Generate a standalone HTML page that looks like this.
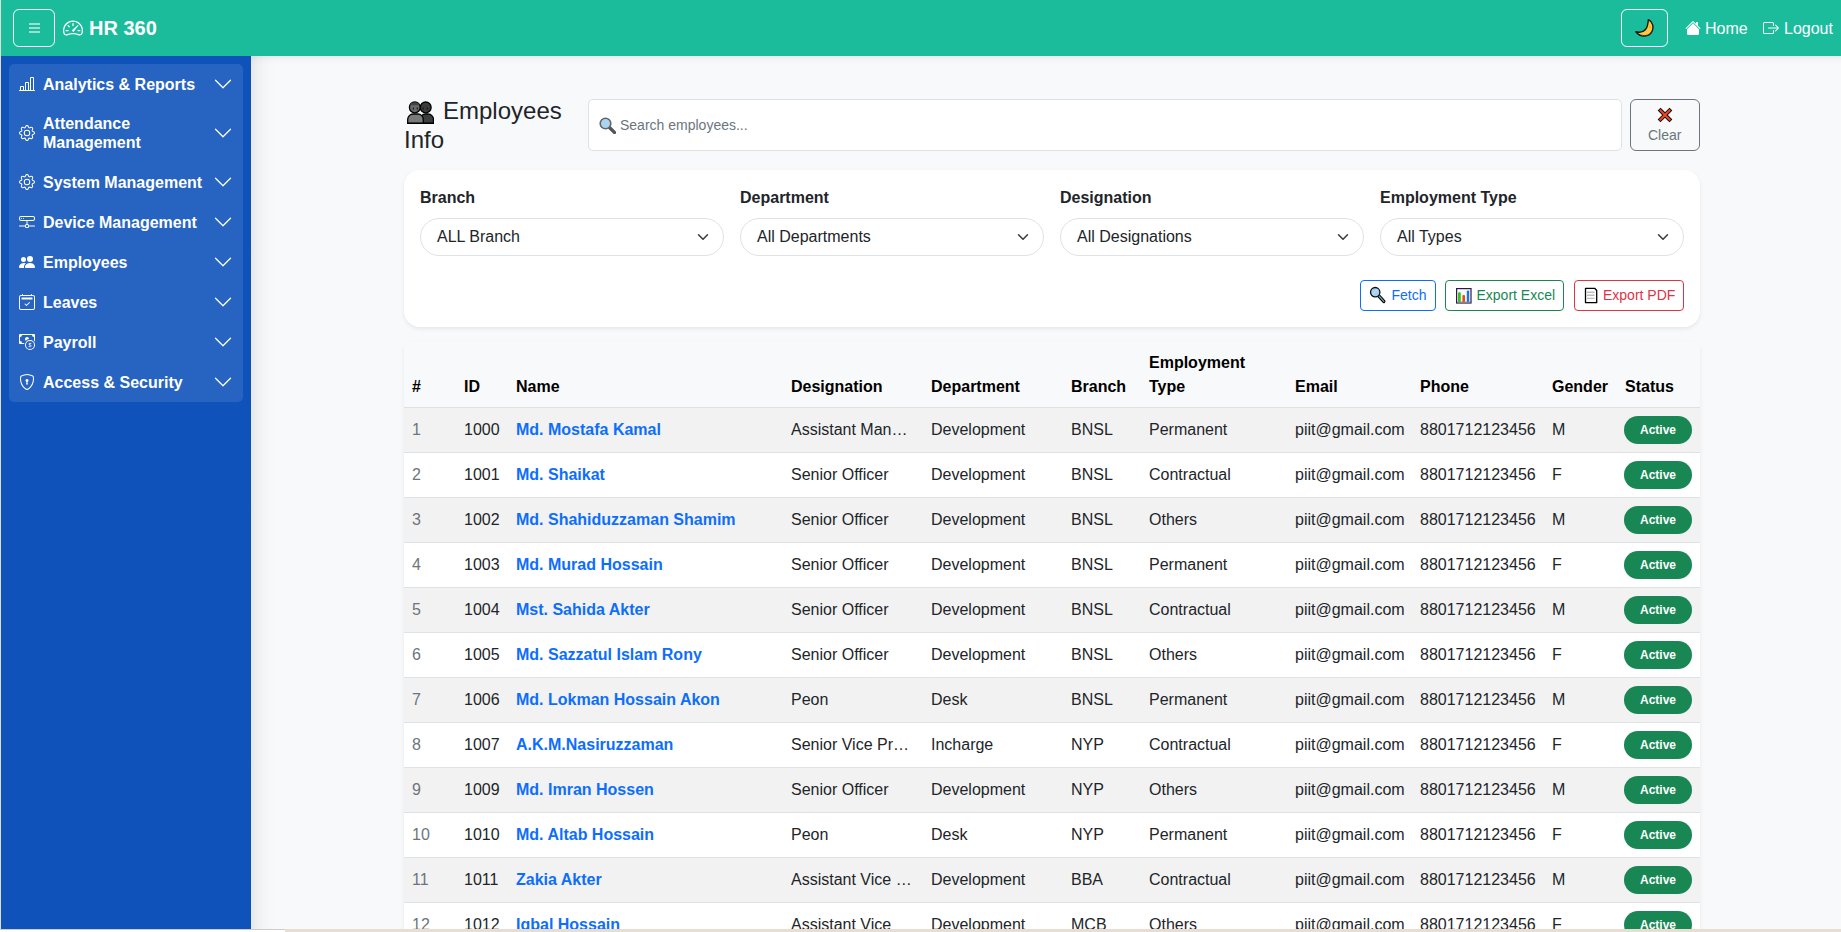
<!DOCTYPE html>
<html><head><meta charset="utf-8"><title>HR 360</title>
<style>
*{box-sizing:border-box}
html,body{margin:0;padding:0;width:1841px;height:932px;overflow:hidden}
body{font-family:"Liberation Sans",sans-serif;font-size:16px;line-height:1.5;color:#212529;background:#f8f9fa;position:relative}
.abs{position:absolute}
#leftline{left:0;top:0;width:1px;height:932px;background:#e6dcd6;z-index:20}
#hdr{left:0;top:0;width:1841px;height:56px;background:#1abc9c;z-index:5}
#hamb{left:13px;top:9px;width:42px;height:38px;border:1px solid #fff;border-radius:6px}
#hamb i{position:absolute;left:15px;width:11px;height:1.6px;background:rgba(255,255,255,.55)}
#brand{left:89px;top:12.5px;font-size:20px;font-weight:700;color:#fff;line-height:30px}
#moon{left:1621px;top:9px;width:47px;height:38px;border:1px solid #fff;border-radius:6px}
.hlink{color:#fff;font-size:16px;line-height:24px;top:16.5px}
#side{left:0;top:56px;width:251px;height:873px;background:#0f52ba;z-index:3}
#shadow{left:251px;top:56px;width:30px;height:873px;background:linear-gradient(to right,rgba(0,0,0,.075),rgba(0,0,0,.035) 7px,rgba(0,0,0,.012) 15px,rgba(0,0,0,0) 24px);z-index:2}
#panel{left:9px;top:8px;width:234px;height:338px;background:rgba(255,255,255,.1);border-radius:5px}
.item{position:absolute;left:0;width:234px;color:#fff;font-weight:700;font-size:16px;line-height:19.2px}
.item svg.ic{position:absolute;left:10px}
.item .tx{position:absolute;left:34px}
.item svg.chev{position:absolute;left:204px;width:20px;height:20px}
#bottom{left:0;top:929px;width:1841px;height:3px;background:#e8ddd3;z-index:30}
#bottomw{left:0;top:929px;width:285px;height:3px;background:#fff;z-index:31;border-top:1px solid #ccc}

#title{left:404px;top:97px;font-size:24px;line-height:28.8px;color:#212529;width:180px}
#search{left:588px;top:99px;width:1034px;height:52px;background:#fff;border:1px solid #dee2e6;border-radius:5px}
#clear{left:1630px;top:99px;width:70px;height:52px;border:1px solid #6c757d;border-radius:6px}
#card{left:404px;top:170px;width:1296px;height:157px;background:#fff;border-radius:16px;box-shadow:0 .125rem .25rem rgba(0,0,0,.075)}
.fcol{position:absolute;top:16px;width:304px}
.flab{font-weight:700;font-size:16px;line-height:24px;margin-bottom:8px}
.fsel{position:relative;height:38px;border:1px solid #dee2e6;border-radius:50rem;padding:6px 16px;line-height:24px;font-size:16px}
.chv{position:absolute;right:14px;top:12px}
.btn{position:absolute;top:110px;height:31px;border:1px solid;border-radius:4px;font-size:14px;line-height:21px}
#tblwrap{left:404px;top:342px;width:1296px;height:600px;background:#fff;border-radius:6px;box-shadow:0 .125rem .25rem rgba(0,0,0,.075);overflow:hidden}
#tbl{border-collapse:collapse;table-layout:fixed;width:1296px}
#tbl th,#tbl td{padding:8px;text-align:left;border-bottom:1px solid #dee2e6;vertical-align:middle;line-height:24px}
#tbl th{background:#f8f9fa;color:#000;font-weight:700;vertical-align:bottom;height:65px}
#tbl td{height:45px}
#tbl tbody tr:nth-child(odd) td{background:#f2f2f2}
#tbl .mut{color:#6c757d}
#tbl a{color:#0d6efd;font-weight:700;text-decoration:none}
.tr{white-space:nowrap;overflow:hidden;text-overflow:ellipsis;width:124px}
.badge{display:inline-block;margin-left:-1px;background:#198754;color:#fff;font-weight:700;font-size:12px;line-height:12px;padding:8px 16px;border-radius:50rem;vertical-align:middle}

.item svg.ic{top:12px}
.item svg.chev{top:10px}
#hshadow{left:251px;top:56px;width:1590px;height:10px;background:linear-gradient(to bottom,rgba(0,0,0,.06),rgba(0,0,0,.02) 4px,rgba(0,0,0,0) 9px);z-index:2}
</style></head>
<body>
<div id="leftline" class="abs"></div>
<div id="hdr" class="abs">
  <div id="hamb" class="abs"><i style="top:13px"></i><i style="top:17px"></i><i style="top:21px"></i></div>
  <svg class="abs" style="left:63px;top:18px" width="20" height="20" viewBox="0 0 16 16" fill="#fff"><path d="M8 4a.5.5 0 0 1 .5.5V6a.5.5 0 0 1-1 0V4.5A.5.5 0 0 1 8 4M3.732 5.732a.5.5 0 0 1 .707 0l.915.914a.5.5 0 1 1-.708.708l-.914-.915a.5.5 0 0 1 0-.707M2 10a.5.5 0 0 1 .5-.5h1.586a.5.5 0 0 1 0 1H2.5A.5.5 0 0 1 2 10m9.5 0a.5.5 0 0 1 .5-.5h1.5a.5.5 0 0 1 0 1H12a.5.5 0 0 1-.5-.5m.754-4.246a.39.39 0 0 0-.527-.02L7.547 9.31a.91.91 0 1 0 1.302 1.258l3.434-4.297a.39.39 0 0 0-.029-.518z"/><path d="M0 10a8 8 0 1 1 15.547 2.661c-.442 1.253-1.845 1.602-2.932 1.25C11.309 13.488 9.475 13 8 13c-1.474 0-3.31.488-4.615.911-1.087.352-2.490.003-2.932-1.25A8 8 0 0 1 0 10m8-7a7 7 0 0 0-6.603 9.329c.203.575.923.876 1.68.63C4.397 12.533 6.358 12 8 12s3.604.532 4.923.96c.757.245 1.477-.056 1.68-.631A7 7 0 0 0 8 3"/></svg>
  <div id="brand" class="abs">HR 360</div>
  <div id="moon" class="abs"><svg class="abs" style="left:13px;top:9px" width="20" height="20" viewBox="0 0 20 20"><path d="M13.4 0.6C17.8 2.6 19.3 8.6 16.6 13.2 14.1 17.4 6 19.4 0.8 12.8 5.2 13.8 9.4 12.6 11.4 9.2 12.7 6.8 13.1 3.6 13.4 0.6Z" fill="#ffc83d" stroke="#1a1a1a" stroke-width="1.4" stroke-linejoin="round"/><circle cx="15" cy="8" r=".8" fill="#e8a020"/><circle cx="7.5" cy="15.8" r=".8" fill="#e8a020"/><circle cx="11.5" cy="15.5" r=".8" fill="#e8a020"/></svg></div>
  <svg class="abs" style="left:1685px;top:20px" width="16" height="16" viewBox="0 0 16 16" fill="#fff"><path d="M8.707 1.5a1 1 0 0 0-1.414 0L.646 8.146a.5.5 0 0 0 .708.708L8 2.207l6.646 6.647a.5.5 0 0 0 .708-.708L13 5.793V2.5a.5.5 0 0 0-.5-.5h-1a.5.5 0 0 0-.5.5v1.293z"/><path d="m8 3.293 6 6V13.5a1.5 1.5 0 0 1-1.5 1.5h-9A1.5 1.5 0 0 1 2 13.5V9.293z"/></svg><div class="abs hlink" style="left:1705px">Home</div>
  <svg class="abs" style="left:1763px;top:20px" width="16" height="16" viewBox="0 0 16 16" fill="#fff"><path d="M10 12.5a.5.5 0 0 1-.5.5h-8a.5.5 0 0 1-.5-.5v-9a.5.5 0 0 1 .5-.5h8a.5.5 0 0 1 .5.5v2a.5.5 0 0 0 1 0v-2A1.5 1.5 0 0 0 9.5 2h-8A1.5 1.5 0 0 0 0 3.5v9A1.5 1.5 0 0 0 1.5 14h8a1.5 1.5 0 0 0 1.5-1.5v-2a.5.5 0 0 0-1 0z"/><path d="M15.854 8.354a.5.5 0 0 0 0-.708l-3-3a.5.5 0 0 0-.708.708L14.293 7.5H5.5a.5.5 0 0 0 0 1h8.793l-2.147 2.146a.5.5 0 0 0 .708.708z"/></svg><div class="abs hlink" style="left:1784px">Logout</div>
</div>
<div id="side" class="abs">
  <div id="panel" class="abs">
    <div class="item" style="top:0;height:40px"><svg class="ic" width="16" height="16" viewBox="0 0 16 16" fill="#fff"><path d="M11 2a1 1 0 0 1 1-1h2a1 1 0 0 1 1 1v12h.5a.5.5 0 0 1 0 1H.5a.5.5 0 0 1 0-1H1v-3a1 1 0 0 1 1-1h2a1 1 0 0 1 1 1v3h1V7a1 1 0 0 1 1-1h2a1 1 0 0 1 1 1v7h1zm1 12h2V2h-2zm-3 0V7H7v7zm-5 0v-3H2v3z"/></svg><span class="tx" style="top:11px">Analytics &amp; Reports</span><svg class="chev" viewBox="0 0 16 16" fill="none" stroke="#fff" stroke-linecap="round" stroke-linejoin="round"><path d="M2 5L8 11L14 5"/></svg></div>
    <div class="item" style="top:40px;height:58px"><svg class="ic" style="top:21px" width="16" height="16" viewBox="0 0 16 16" fill="#fff"><path d="M8 4.754a3.246 3.246 0 1 0 0 6.492 3.246 3.246 0 0 0 0-6.492M5.754 8a2.246 2.246 0 1 1 4.492 0 2.246 2.246 0 0 1-4.492 0"/><path d="M9.796 1.343c-.527-1.79-3.065-1.79-3.592 0l-.094.319a.873.873 0 0 1-1.255.52l-.292-.16c-1.64-.892-3.433.902-2.54 2.541l.159.292a.873.873 0 0 1-.52 1.255l-.319.094c-1.79.527-1.79 3.065 0 3.592l.319.094a.873.873 0 0 1 .52 1.255l-.16.292c-.892 1.64.901 3.434 2.541 2.54l.292-.159a.873.873 0 0 1 1.255.52l.094.319c.527 1.79 3.065 1.79 3.592 0l.094-.319a.873.873 0 0 1 1.255-.52l.292.16c1.64.893 3.434-.902 2.54-2.541l-.159-.292a.873.873 0 0 1 .52-1.255l.319-.094c1.79-.527 1.79-3.065 0-3.592l-.319-.094a.873.873 0 0 1-.52-1.255l.16-.292c.893-1.64-.902-3.433-2.541-2.54l-.292.159a.873.873 0 0 1-1.255-.52zm-2.633.283c.246-.835 1.428-.835 1.674 0l.094.319a1.873 1.873 0 0 0 2.693 1.115l.291-.16c.764-.415 1.6.42 1.184 1.185l-.159.292a1.873 1.873 0 0 0 1.116 2.692l.318.094c.835.246.835 1.428 0 1.674l-.319.094a1.873 1.873 0 0 0-1.115 2.693l.16.291c.415.764-.42 1.6-1.185 1.184l-.291-.159a1.873 1.873 0 0 0-2.693 1.116l-.094.318c-.246.835-1.428.835-1.674 0l-.094-.319a1.873 1.873 0 0 0-2.692-1.115l-.292.16c-.764.415-1.6-.42-1.184-1.185l.159-.291A1.873 1.873 0 0 0 1.945 8.93l-.319-.094c-.835-.246-.835-1.428 0-1.674l.319-.094A1.873 1.873 0 0 0 3.06 4.377l-.16-.292c-.415-.764.42-1.6 1.185-1.184l.292.159a1.873 1.873 0 0 0 2.692-1.115z"/></svg><span class="tx" style="top:10px">Attendance<br>Management</span><svg class="chev" style="top:19px" viewBox="0 0 16 16" fill="none" stroke="#fff" stroke-linecap="round" stroke-linejoin="round"><path d="M2 5L8 11L14 5"/></svg></div>
    <div class="item" style="top:98px;height:40px"><svg class="ic" width="16" height="16" viewBox="0 0 16 16" fill="#fff"><path d="M8 4.754a3.246 3.246 0 1 0 0 6.492 3.246 3.246 0 0 0 0-6.492M5.754 8a2.246 2.246 0 1 1 4.492 0 2.246 2.246 0 0 1-4.492 0"/><path d="M9.796 1.343c-.527-1.79-3.065-1.79-3.592 0l-.094.319a.873.873 0 0 1-1.255.52l-.292-.16c-1.64-.892-3.433.902-2.54 2.541l.159.292a.873.873 0 0 1-.52 1.255l-.319.094c-1.79.527-1.79 3.065 0 3.592l.319.094a.873.873 0 0 1 .52 1.255l-.16.292c-.892 1.64.901 3.434 2.541 2.54l.292-.159a.873.873 0 0 1 1.255.52l.094.319c.527 1.79 3.065 1.79 3.592 0l.094-.319a.873.873 0 0 1 1.255-.52l.292.16c1.64.893 3.434-.902 2.54-2.541l-.159-.292a.873.873 0 0 1 .52-1.255l.319-.094c1.79-.527 1.79-3.065 0-3.592l-.319-.094a.873.873 0 0 1-.52-1.255l.16-.292c.893-1.64-.902-3.433-2.541-2.54l-.292.159a.873.873 0 0 1-1.255-.52zm-2.633.283c.246-.835 1.428-.835 1.674 0l.094.319a1.873 1.873 0 0 0 2.693 1.115l.291-.16c.764-.415 1.6.42 1.184 1.185l-.159.292a1.873 1.873 0 0 0 1.116 2.692l.318.094c.835.246.835 1.428 0 1.674l-.319.094a1.873 1.873 0 0 0-1.115 2.693l.16.291c.415.764-.42 1.6-1.185 1.184l-.291-.159a1.873 1.873 0 0 0-2.693 1.116l-.094.318c-.246.835-1.428.835-1.674 0l-.094-.319a1.873 1.873 0 0 0-2.692-1.115l-.292.16c-.764.415-1.6-.42-1.184-1.185l.159-.291A1.873 1.873 0 0 0 1.945 8.93l-.319-.094c-.835-.246-.835-1.428 0-1.674l.319-.094A1.873 1.873 0 0 0 3.06 4.377l-.16-.292c-.415-.764.42-1.6 1.185-1.184l.292.159a1.873 1.873 0 0 0 2.692-1.115z"/></svg><span class="tx" style="top:11px">System Management</span><svg class="chev" viewBox="0 0 16 16" fill="none" stroke="#fff" stroke-linecap="round" stroke-linejoin="round"><path d="M2 5L8 11L14 5"/></svg></div>
    <div class="item" style="top:138px;height:40px"><svg class="ic" width="16" height="16" viewBox="0 0 16 16" fill="#fff"><path d="M4.5 5a.5.5 0 1 0 0-1 .5.5 0 0 0 0 1M3 4.5a.5.5 0 1 1-1 0 .5.5 0 0 1 1 0"/><path d="M0 4a2 2 0 0 1 2-2h12a2 2 0 0 1 2 2v1a2 2 0 0 1-2 2H8.5v3a1.5 1.5 0 0 1 1.5 1.5h5.5a.5.5 0 0 1 0 1H10A1.5 1.5 0 0 1 8.5 14h-1A1.5 1.5 0 0 1 6 12.5H.5a.5.5 0 0 1 0-1H6A1.5 1.5 0 0 1 7.5 10V7H2a2 2 0 0 1-2-2zm1 0v1a1 1 0 0 0 1 1h12a1 1 0 0 0 1-1V4a1 1 0 0 0-1-1H2a1 1 0 0 0-1 1m6 7.5v1a.5.5 0 0 0 .5.5h1a.5.5 0 0 0 .5-.5v-1a.5.5 0 0 0-.5-.5h-1a.5.5 0 0 0-.5.5"/></svg><span class="tx" style="top:11px">Device Management</span><svg class="chev" viewBox="0 0 16 16" fill="none" stroke="#fff" stroke-linecap="round" stroke-linejoin="round"><path d="M2 5L8 11L14 5"/></svg></div>
    <div class="item" style="top:178px;height:40px"><svg class="ic" width="16" height="16" viewBox="0 0 16 16" fill="#fff"><path d="M7 14s-1 0-1-1 1-4 5-4 5 3 5 4-1 1-1 1zm4-6a3 3 0 1 0 0-6 3 3 0 0 0 0 6m-5.784 6A2.24 2.24 0 0 1 5 13c0-1.355.68-2.75 1.936-3.72A6.3 6.3 0 0 0 5 9c-4 0-5 3-5 4s1 1 1 1zM4.5 8a2.5 2.5 0 1 0 0-5 2.5 2.5 0 0 0 0 5"/></svg><span class="tx" style="top:11px">Employees</span><svg class="chev" viewBox="0 0 16 16" fill="none" stroke="#fff" stroke-linecap="round" stroke-linejoin="round"><path d="M2 5L8 11L14 5"/></svg></div>
    <div class="item" style="top:218px;height:40px"><svg class="ic" width="16" height="16" viewBox="0 0 16 16" fill="#fff"><path d="M10.854 8.146a.5.5 0 0 1 0 .708l-3 3a.5.5 0 0 1-.708 0l-1.5-1.5a.5.5 0 0 1 .708-.708L7.5 10.793l2.646-2.647a.5.5 0 0 1 .708 0"/><path d="M3.5 0a.5.5 0 0 1 .5.5V1h8V.5a.5.5 0 0 1 1 0V1h1a2 2 0 0 1 2 2v11a2 2 0 0 1-2 2H2a2 2 0 0 1-2-2V3a2 2 0 0 1 2-2h1V.5a.5.5 0 0 1 .5-.5M2 2a1 1 0 0 0-1 1v11a1 1 0 0 0 1 1h12a1 1 0 0 0 1-1V3a1 1 0 0 0-1-1z"/><path d="M2.5 4a.5.5 0 0 1 .5-.5h10a.5.5 0 0 1 .5.5v1a.5.5 0 0 1-.5.5H3a.5.5 0 0 1-.5-.5z"/></svg><span class="tx" style="top:11px">Leaves</span><svg class="chev" viewBox="0 0 16 16" fill="none" stroke="#fff" stroke-linecap="round" stroke-linejoin="round"><path d="M2 5L8 11L14 5"/></svg></div>
    <div class="item" style="top:258px;height:40px"><svg class="ic" width="16" height="16" viewBox="0 0 16 16" fill="#fff"><path d="M11 15a4 4 0 1 0 0-8 4 4 0 0 0 0 8m5-4a5 5 0 1 1-10 0 5 5 0 0 1 10 0"/><path d="M9.438 11.944c.047.596.518 1.06 1.363 1.116v.44h.375v-.443c.875-.061 1.386-.529 1.386-1.207 0-.618-.39-.936-1.09-1.1l-.296-.07v-1.2c.376.043.614.248.671.532h.658c-.047-.575-.54-1.024-1.329-1.073V8.5h-.375v.45c-.747.073-1.255.522-1.255 1.158 0 .562.378.92 1.007 1.066l.248.061v1.272c-.384-.058-.639-.27-.696-.563h-.668zm1.36-1.354c-.369-.085-.569-.26-.569-.522 0-.294.216-.514.572-.578v1.1zm.432.746c.449.104.655.272.655.569 0 .339-.257.571-.709.607v-1.195z"/><path d="M1 0a1 1 0 0 0-1 1v8a1 1 0 0 0 1 1h4.083q.088-.517.258-1H3a2 2 0 0 0-2-2V3a2 2 0 0 0 2-2h10a2 2 0 0 0 2 2v3.528c.38.34.717.728 1 1.154V1a1 1 0 0 0-1-1z"/><path d="M9.998 5.083 10 5a2 2 0 1 0-3.132 1.65 6 6 0 0 1 3.13-1.567"/></svg><span class="tx" style="top:11px">Payroll</span><svg class="chev" viewBox="0 0 16 16" fill="none" stroke="#fff" stroke-linecap="round" stroke-linejoin="round"><path d="M2 5L8 11L14 5"/></svg></div>
    <div class="item" style="top:298px;height:40px"><svg class="ic" width="16" height="16" viewBox="0 0 16 16" fill="#fff"><path d="M5.338 1.59a61 61 0 0 0-2.837.856.48.48 0 0 0-.328.39c-.554 4.157.726 7.19 2.253 9.188a10.7 10.7 0 0 0 2.287 2.233c.346.244.652.42.893.533q.18.085.293.118a1 1 0 0 0 .101.025 1 1 0 0 0 .1-.025q.114-.034.294-.118c.24-.113.547-.29.893-.533a10.7 10.7 0 0 0 2.287-2.233c1.527-1.997 2.807-5.031 2.253-9.188a.48.48 0 0 0-.328-.39c-.651-.213-1.75-.56-2.837-.855C9.552 1.29 8.531 1.067 8 1.067c-.53 0-1.552.223-2.662.524zM5.072.56C6.157.265 7.31 0 8 0s1.843.265 2.928.56c1.11.3 2.229.655 2.887.87a1.54 1.54 0 0 1 1.044 1.262c.596 4.477-.787 7.795-2.465 9.99a11.8 11.8 0 0 1-2.517 2.453 7 7 0 0 1-1.048.625c-.28.132-.581.24-.829.24s-.548-.108-.829-.24a7 7 0 0 1-1.048-.625 11.8 11.8 0 0 1-2.517-2.453C1.928 10.487.545 7.169 1.141 2.692A1.54 1.54 0 0 1 2.185 1.43 63 63 0 0 1 5.072.56"/><path d="M9.5 6.5a1.5 1.5 0 0 1-1 1.415l.385 1.99a.5.5 0 0 1-.491.595h-.788a.5.5 0 0 1-.49-.595l.384-1.99a1.5 1.5 0 1 1 2-1.415"/></svg><span class="tx" style="top:11px">Access &amp; Security</span><svg class="chev" viewBox="0 0 16 16" fill="none" stroke="#fff" stroke-linecap="round" stroke-linejoin="round"><path d="M2 5L8 11L14 5"/></svg></div>
  </div>
</div>
<div id="shadow" class="abs"></div><div id="hshadow" class="abs"></div>
<!-- MAIN -->
<div id="title" class="abs"><span style="display:inline-block;width:39px"></span>Employees<br>Info</div><svg class="abs" style="left:407px;top:100px" width="27" height="24" viewBox="0 0 27 24"><g stroke="#000" stroke-width="1.3"><path d="M13 23.3V19.5a5.5 5.5 0 0 1 5.5-5.5h2.5a5.5 5.5 0 0 1 5.5 5.5v3.8z" fill="#3d3d3d"/><circle cx="18.7" cy="7.4" r="5.4" fill="#3b3b3b"/><path d="M0.7 23.3V19.5a5.5 5.5 0 0 1 5.5-5.5h4.6a5.5 5.5 0 0 1 5.5 5.5v3.8z" fill="#7a7a7a"/><circle cx="7.8" cy="7.4" r="5.4" fill="#6a6a6a"/></g><path d="M0.7 22.6h25.6v1.2H0.7z" fill="#000"/><path d="M3 5.2a5 4 0 0 1 9.6 0z" fill="#444"/><g fill="#111"><rect x="5.8" y="7.5" width="1.1" height="2"/><rect x="9.8" y="7.5" width="1.1" height="2"/><rect x="15.6" y="7.5" width="1.1" height="2"/><rect x="19.8" y="7.5" width="1.1" height="2"/></g></svg>
<div id="search" class="abs"><span class="emo" style="position:absolute;left:10px;top:17px"><svg width="17" height="17" viewBox="0 0 17 17"><path d="M10 10l5.5 5.5" stroke="#555" stroke-width="3.2" stroke-linecap="round"/><circle cx="6.5" cy="6.5" r="5.3" fill="#a9d4f2" stroke="#666" stroke-width="1.6"/></svg></span><span style="position:absolute;left:31px;top:15px;font-size:14px;line-height:21px;color:#6c757d">Search employees...</span></div>
<div id="clear" class="abs"><svg class="abs" style="left:26px;top:6.5px" width="16" height="16" viewBox="0 0 16 16"><path d="M3.5 3.5l9 9M12.5 3.5l-9 9" stroke="#111" stroke-width="4" stroke-linecap="square"/><path d="M3.5 3.5l9 9M12.5 3.5l-9 9" stroke="#f2461e" stroke-width="2" stroke-linecap="square"/></svg><span class="abs" style="left:17px;top:25px;font-size:14px;line-height:21px;color:#6c757d">Clear</span></div>
<div id="card" class="abs">
  <div class="fcol" style="left:16px"><div class="flab">Branch</div><div class="fsel">ALL Branch<svg class="chv" width="12" height="12" viewBox="0 0 16 16"><path d="M2 5l6 6 6-6" fill="none" stroke="#343a40" stroke-width="2" stroke-linecap="round" stroke-linejoin="round"/></svg></div></div>
  <div class="fcol" style="left:336px"><div class="flab">Department</div><div class="fsel">All Departments<svg class="chv" width="12" height="12" viewBox="0 0 16 16"><path d="M2 5l6 6 6-6" fill="none" stroke="#343a40" stroke-width="2" stroke-linecap="round" stroke-linejoin="round"/></svg></div></div>
  <div class="fcol" style="left:656px"><div class="flab">Designation</div><div class="fsel">All Designations<svg class="chv" width="12" height="12" viewBox="0 0 16 16"><path d="M2 5l6 6 6-6" fill="none" stroke="#343a40" stroke-width="2" stroke-linecap="round" stroke-linejoin="round"/></svg></div></div>
  <div class="fcol" style="left:976px"><div class="flab">Employment Type</div><div class="fsel">All Types<svg class="chv" width="12" height="12" viewBox="0 0 16 16"><path d="M2 5l6 6 6-6" fill="none" stroke="#343a40" stroke-width="2" stroke-linecap="round" stroke-linejoin="round"/></svg></div></div>
  <div class="btn" style="left:956px;width:76px;border-color:#0d6efd;color:#0d6efd"><svg style="position:absolute;left:8px;top:5px" width="18" height="18" viewBox="0 0 18 18"><path d="M9.8 9.8l5 5.6" stroke="#000" stroke-width="3.4" stroke-linecap="round"/><path d="M9.8 9.8l5 5.6" stroke="#7d9aa8" stroke-width="1.4" stroke-linecap="round"/><circle cx="6.2" cy="6.2" r="4.7" fill="#a6d1f0" stroke="#111" stroke-width="1.3"/><path d="M3.5 8.5l5-5" stroke="#c8e3f7" stroke-width="1"/></svg><span style="position:absolute;left:30.5px;top:4px">Fetch</span></div>
  <div class="btn" style="left:1041px;width:119px;border-color:#198754;color:#198754"><svg style="position:absolute;left:10px;top:7px" width="16" height="16" viewBox="0 0 16 16"><rect x="0.6" y="0.6" width="14.4" height="14.4" fill="#fafafa" stroke="#2a1a4a" stroke-width="1.2"/><rect x="2" y="4.2" width="2.8" height="10" rx="1" fill="#3dc21a"/><rect x="6.4" y="7" width="2.6" height="7.2" rx="1" fill="#f04a10"/><rect x="10.8" y="2.4" width="2.4" height="11.8" rx="1" fill="#1a73e8"/><rect x="1.2" y="13.6" width="13.2" height="1" fill="#888"/></svg><span style="position:absolute;left:30.5px;top:4px">Export Excel</span></div>
  <div class="btn" style="left:1170px;width:110px;border-color:#dc3545;color:#dc3545"><svg style="position:absolute;left:9px;top:6px" width="14" height="17" viewBox="0 0 14 17"><path d="M1.5 1.3h9.2l2 2.2v12.2H1.5z" fill="#fff" stroke="#000" stroke-width="1.3" stroke-linejoin="round"/><path d="M3 5.2h7.5M3 8.3h7.5M3 11.4h7.5" stroke="#bdbdbd" stroke-width="1.4"/></svg><span style="position:absolute;left:28px;top:4px">Export PDF</span></div>
</div>
<div id="tblwrap" class="abs">
<table id="tbl">
<colgroup><col style="width:52px"><col style="width:52px"><col style="width:275px"><col style="width:140px"><col style="width:140px"><col style="width:78px"><col style="width:146px"><col style="width:125px"><col style="width:132px"><col style="width:73px"><col style="width:83px"></colgroup>
<thead><tr><th>#</th><th>ID</th><th>Name</th><th>Designation</th><th>Department</th><th>Branch</th><th>Employment Type</th><th>Email</th><th>Phone</th><th>Gender</th><th>Status</th></tr></thead>
<tbody>
<tr><td class="mut">1</td><td>1000</td><td><a>Md. Mostafa Kamal</a></td><td><div class="tr">Assistant Manager</div></td><td>Development</td><td>BNSL</td><td>Permanent</td><td>piit@gmail.com</td><td>8801712123456</td><td>M</td><td><span class="badge">Active</span></td></tr>
<tr><td class="mut">2</td><td>1001</td><td><a>Md. Shaikat</a></td><td><div class="tr">Senior Officer</div></td><td>Development</td><td>BNSL</td><td>Contractual</td><td>piit@gmail.com</td><td>8801712123456</td><td>F</td><td><span class="badge">Active</span></td></tr>
<tr><td class="mut">3</td><td>1002</td><td><a>Md. Shahiduzzaman Shamim</a></td><td><div class="tr">Senior Officer</div></td><td>Development</td><td>BNSL</td><td>Others</td><td>piit@gmail.com</td><td>8801712123456</td><td>M</td><td><span class="badge">Active</span></td></tr>
<tr><td class="mut">4</td><td>1003</td><td><a>Md. Murad Hossain</a></td><td><div class="tr">Senior Officer</div></td><td>Development</td><td>BNSL</td><td>Permanent</td><td>piit@gmail.com</td><td>8801712123456</td><td>F</td><td><span class="badge">Active</span></td></tr>
<tr><td class="mut">5</td><td>1004</td><td><a>Mst. Sahida Akter</a></td><td><div class="tr">Senior Officer</div></td><td>Development</td><td>BNSL</td><td>Contractual</td><td>piit@gmail.com</td><td>8801712123456</td><td>M</td><td><span class="badge">Active</span></td></tr>
<tr><td class="mut">6</td><td>1005</td><td><a>Md. Sazzatul Islam Rony</a></td><td><div class="tr">Senior Officer</div></td><td>Development</td><td>BNSL</td><td>Others</td><td>piit@gmail.com</td><td>8801712123456</td><td>F</td><td><span class="badge">Active</span></td></tr>
<tr><td class="mut">7</td><td>1006</td><td><a>Md. Lokman Hossain Akon</a></td><td><div class="tr">Peon</div></td><td>Desk</td><td>BNSL</td><td>Permanent</td><td>piit@gmail.com</td><td>8801712123456</td><td>M</td><td><span class="badge">Active</span></td></tr>
<tr><td class="mut">8</td><td>1007</td><td><a>A.K.M.Nasiruzzaman</a></td><td><div class="tr">Senior Vice President</div></td><td>Incharge</td><td>NYP</td><td>Contractual</td><td>piit@gmail.com</td><td>8801712123456</td><td>F</td><td><span class="badge">Active</span></td></tr>
<tr><td class="mut">9</td><td>1009</td><td><a>Md. Imran Hossen</a></td><td><div class="tr">Senior Officer</div></td><td>Development</td><td>NYP</td><td>Others</td><td>piit@gmail.com</td><td>8801712123456</td><td>M</td><td><span class="badge">Active</span></td></tr>
<tr><td class="mut">10</td><td>1010</td><td><a>Md. Altab Hossain</a></td><td><div class="tr">Peon</div></td><td>Desk</td><td>NYP</td><td>Permanent</td><td>piit@gmail.com</td><td>8801712123456</td><td>F</td><td><span class="badge">Active</span></td></tr>
<tr><td class="mut">11</td><td>1011</td><td><a>Zakia Akter</a></td><td><div class="tr">Assistant Vice President</div></td><td>Development</td><td>BBA</td><td>Contractual</td><td>piit@gmail.com</td><td>8801712123456</td><td>M</td><td><span class="badge">Active</span></td></tr>
<tr><td class="mut">12</td><td>1012</td><td><a>Iqbal Hossain</a></td><td><div class="tr">Assistant Vice</div></td><td>Development</td><td>MCB</td><td>Others</td><td>piit@gmail.com</td><td>8801712123456</td><td>F</td><td><span class="badge">Active</span></td></tr>
</tbody></table>
</div>

<div id="bottom" class="abs"></div>
<div id="bottomw" class="abs"></div>
</body></html>
